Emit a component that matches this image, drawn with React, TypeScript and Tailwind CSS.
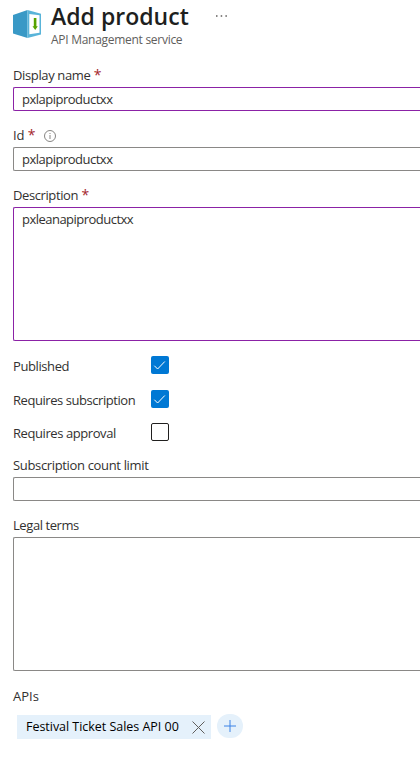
import type { ReactNode } from "react";

function Label({ children }: { children: ReactNode }) {
  return <div className="mb-[2px] flex h-5 items-center text-[13px] leading-5 text-[#323130]">{children}</div>;
}

function Star() {
  return <span className="ml-[3.5px] text-[14px] text-[#a4262c]">*</span>;
}

function Check({ checked = false }: { checked?: boolean }) {
  return (
    <span
      className={
        checked
          ? "flex size-[18px] items-center justify-center rounded-[2px] bg-[#0078d4]"
          : "flex size-[18px] rounded-[2px] border border-[#201f1e] bg-white"
      }
    >
      {checked && (
        <svg width="18" height="18" viewBox="0 0 18 18" fill="none" stroke="white" strokeWidth="1">
          <path d="M3.300 9.700 6.600 13 13.800 5.500" />
        </svg>
      )}
    </span>
  );
}

function ProductIcon() {
  return (
    <svg width="28" height="28" viewBox="0 0 28 28" className="mt-[10px] shrink-0">
      <path d="M0 5 14.5 0V28L0 23.5Z" fill="#3999c6" />
      <path d="M14.500 0 28 3.800V24.500L14.500 28Z" fill="#59b4d9" />
      <path d="M16.300 4 26.500 5.300V22.700L16.300 24.200Z" fill="white" />
      <path d="M20.800 8h2.600v8.200h1.400L22.200 20l-2.700-3.800h1.300Z" fill="#57a300" />
    </svg>
  );
}

export default function App() {
  return (
    <main className="h-[764px] w-[420px] overflow-hidden bg-white pl-[13px] font-['Open_Sans','Noto_Sans',sans-serif] text-[#323130]">
      <header className="flex h-[65px]">
        <ProductIcon />
        <div className="ml-[10px]">
          <div className="flex h-8 items-center">
            <h1 className="text-[23px] leading-8 font-semibold tracking-[0.02px] whitespace-nowrap text-[#201f1e]">Add product</h1>
            <svg width="12" height="2" viewBox="0 0 12 2" fill="#605e5c" className="ml-[27px]">
              <path d="M0 .3h1.500v1.500H0zM4.700 .3h1.500v1.500H4.700zM9.400 .3h1.500v1.500H9.400z" />
            </svg>
          </div>
          <p className="text-[12px] leading-4 tracking-[-0.28px] text-[#605e5c]">API Management service</p>
        </div>
      </header>

      <section className="mb-[14px]">
        <Label><span className="tracking-[-0.37px]">Display name</span><Star /></Label>
        <div className="h-6 rounded-l-[2px] border border-r-0 border-[#8b22a6] pl-2 text-[13px] leading-[22px] tracking-[-0.5px]">pxlapiproductxx</div>
      </section>
      <section className="mb-[14px]">
        <Label>
          <span className="tracking-[-0.2px]">Id</span><Star />
          <svg width="12" height="12" viewBox="0 0 12 12" className="mt-px ml-[9px]" fill="none" stroke="#797775">
            <circle cx="6" cy="6" r="5.500" strokeWidth=".9" />
            <path d="M6 5v4M6 3v1" strokeWidth=".9" />
          </svg>
        </Label>
        <div className="h-6 rounded-l-[2px] border border-r-0 border-[#8a8886] pl-2 text-[13px] leading-[22px] tracking-[-0.5px]">pxlapiproductxx</div>
      </section>
      <section className="mb-[15px]">
        <Label><span className="tracking-[-0.4px]">Description</span><Star /></Label>
        <div className="h-[134px] rounded-l-[2px] border border-r-0 border-[#8b22a6] pl-2 text-[13px] leading-[22px] tracking-[-0.52px]">pxleanapiproductxx</div>
      </section>

      <section className="mb-[14px] text-[13px]">
        <div className="mb-4 flex h-[18px] items-center"><span className="w-[138px] pt-[3px] tracking-[-0.4px]">Published</span><Check checked /></div>
        <div className="mb-[15px] flex h-[18px] items-center"><span className="w-[138px] pt-[3px] tracking-[-0.44px]">Requires subscription</span><Check checked /></div>
        <div className="flex h-[18px] items-center"><span className="w-[138px] pt-[3px] tracking-[-0.42px]">Requires approval</span><Check /></div>
      </section>

      <section className="mb-[14px]">
        <Label><span className="tracking-[-0.34px]">Subscription count limit</span></Label>
        <div className="h-6 rounded-l-[2px] border border-r-0 border-[#8a8886]" />
      </section>
      <section className="mb-[15px]">
        <Label><span className="tracking-[-0.42px]">Legal terms</span></Label>
        <div className="h-[134px] rounded-l-[2px] border border-r-0 border-[#8a8886]" />
      </section>
      <section>
        <div className="h-5 text-[13px] leading-5">APIs</div>
        <div className="mt-[8px] ml-1 flex items-start">
          <div className="mt-px flex h-6 w-[194px] items-center bg-[#e5f1fb] pl-[9px] text-[12.500px] whitespace-nowrap text-black">
            <span className="w-[165.5px] tracking-[-0.03px]">Festival Ticket Sales API 00</span>
            <svg width="13" height="13" viewBox="0 0 13 13" stroke="#605e5c" strokeWidth="1"><path d="m.5.5 12 12m0-12-12 12" /></svg>
          </div>
          <div className="ml-[6px] flex h-6 w-[26px] items-center justify-center rounded-full bg-[#e5f1fb]">
            <svg width="12" height="12" viewBox="0 0 12 12" stroke="#3b82e6" strokeWidth="1"><path d="M6 0v12M0 6h12" /></svg>
          </div>
        </div>
      </section>
    </main>
  );
}
